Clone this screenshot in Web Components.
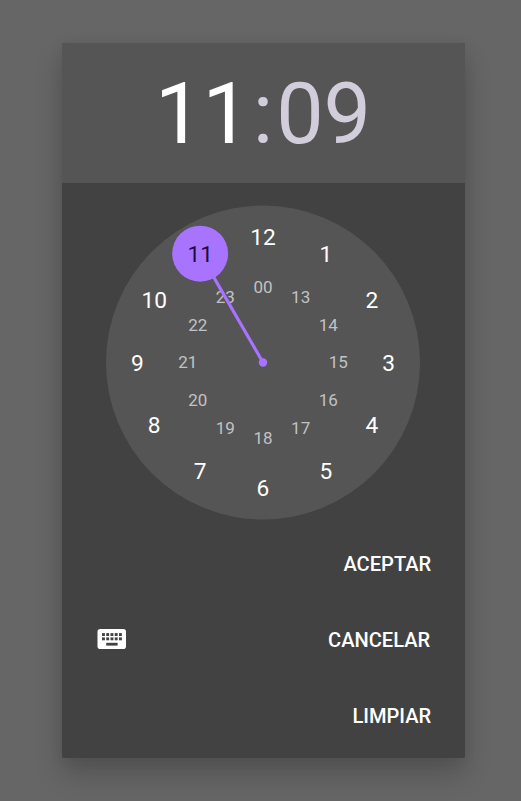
<!DOCTYPE html>
<html lang="es">
<head>
<meta charset="utf-8">
<title>Selector de hora</title>
<style>
html,body{margin:0;height:100%;overflow:hidden;background:#666;font-family:Roboto,"Liberation Sans",sans-serif}
</style>
</head>
<body>
<time-picker-dialog>
  <time-display slot="header" hour="11" minute="09"></time-display>
  <clock-dial value="11"></clock-dial>
  <keyboard-icon slot="mode"></keyboard-icon>
  <dialog-button slot="actions">ACEPTAR</dialog-button>
  <dialog-button slot="actions" class="mid">CANCELAR</dialog-button>
  <dialog-button slot="actions">LIMPIAR</dialog-button>
</time-picker-dialog>
<script>
class Base extends HTMLElement{
  connectedCallback(){
    if(!this.shadowRoot) this.attachShadow({mode:'open'}).innerHTML=this.render();
  }
}
customElements.define('time-picker-dialog',class extends Base{
  render(){return `<style>
:host{display:block;box-sizing:border-box;height:801px;padding:43px 56.5px 43px 61.5px}
.card{display:flex;flex-direction:column;height:715px;border-radius:2px;background:#424242;box-shadow:0 16px 28px rgba(0,0,0,.2),0 2px 14px rgba(0,0,0,.06)}
header{height:140px;background:#555;border-radius:2px 2px 0 0}
main{display:flex;justify-content:center;padding-top:23px}
footer{display:grid;grid-template-columns:1fr auto;align-items:center;padding:6px 33.3px 0 35.5px}
.actions{display:flex;flex-direction:column;align-items:flex-end}
</style>
<div class="card"><header><slot name="header"></slot></header><main><slot></slot></main>
<footer><slot name="mode"></slot><div class="actions"><slot name="actions"></slot></div></footer></div>`}
});
customElements.define('time-display',class extends Base{
  render(){return `<style>
:host{display:flex;justify-content:center;height:140px;line-height:144px;font-size:84.5px;color:#d1cdda}
.h{color:#fff}
.c{margin:0 2.9px}
</style><span class="h">${this.getAttribute('hour')}</span><span class="c">:</span><span>${this.getAttribute('minute')}</span>`}
});
customElements.define('clock-dial',class extends Base{
  render(){
    const c=157,sel=+this.getAttribute('value');
    const at=(i,r)=>[c+r*Math.sin(i*Math.PI/6),c-r*Math.cos(i*Math.PI/6)];
    const label=(t,i,r,k,dy)=>{const [x,y]=at(i,r);return `<text class="${k}" x="${x.toFixed(2)}" y="${(y+dy).toFixed(2)}">${t}</text>`};
    let outer='',inner='';
    for(let i=1;i<=12;i++){
      outer+=label(i,i,125.7,i===sel?'on':'out',8);
      inner+=label(i===12?'00':i+12,i,75.3,'in',5.8);
    }
    const [hx,hy]=at(sel,125.7);
    return `<style>
:host{display:block;width:314px;height:314px}
svg{display:block;overflow:visible}
text{text-anchor:middle}
.out,.on{font-size:22.7px;fill:#fff}
.on{fill:#1d0b38}
.in{font-size:17px;fill:#c2c2c2}
</style><svg width="314" height="314" viewBox="0 0.5 314 314">
<circle cx="157" cy="157" r="157" fill="#555"/>${inner}
<path d="M${c} ${c}L${hx} ${hy}" stroke="#a873ff" stroke-width="3.2"/>
<circle cx="157" cy="157" r="4.2" fill="#a873ff"/><circle cx="${hx}" cy="${hy}" r="28" fill="#a873ff"/>${outer}</svg>`}
});
customElements.define('keyboard-icon',class extends Base{
  render(){
    let k='';
    for(let r=0;r<2;r++)for(let i=0;i<5;i++)k+=`<rect x="${5+i*4.25}" y="${4.1+r*4.3}" width="2.9" height="2.9"/>`;
    return `<style>:host{display:block;width:29px;height:20px;padding-bottom:2px}svg{display:block}</style>
<svg width="29" height="20" viewBox="0 0 29 20"><rect x=".5" width="28.5" height="20" rx="2.8" fill="#fff"/><g fill="#424242">${k}<rect x="9.2" y="13.8" width="11.4" height="2.8"/></g></svg>`}
});
customElements.define('dialog-button',class extends Base{
  render(){return `<style>:host{display:block;height:76px;line-height:76px;font-size:20.1px;font-weight:500;color:#fff}
:host(.mid){padding-right:1px}</style><slot></slot>`}
});
</script>
</body>
</html>
